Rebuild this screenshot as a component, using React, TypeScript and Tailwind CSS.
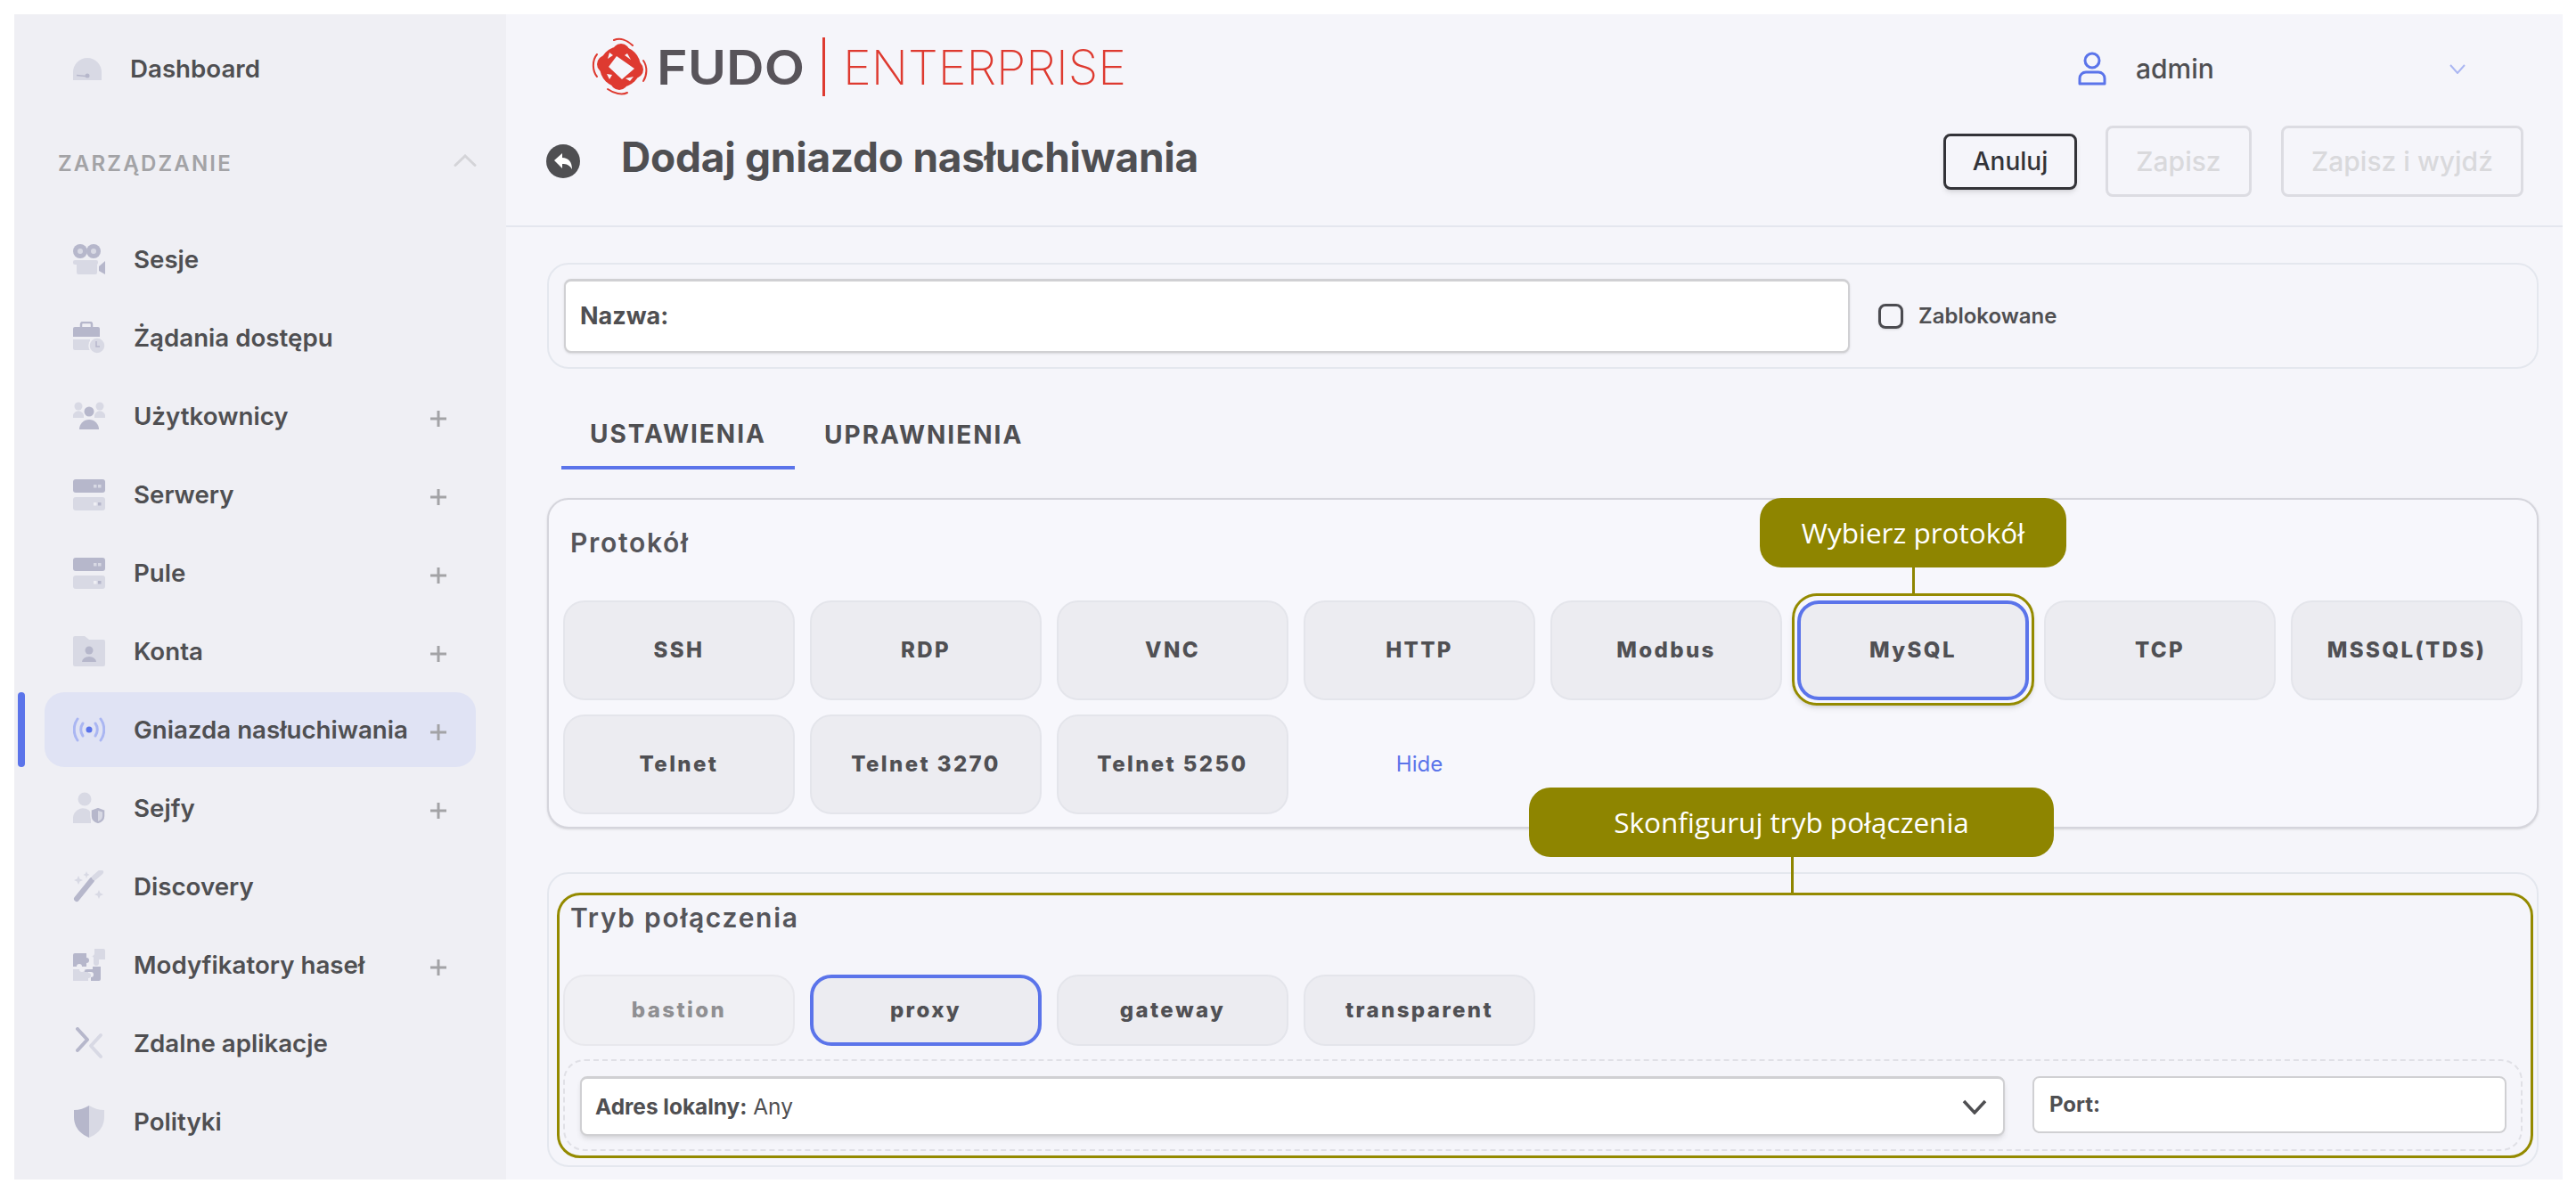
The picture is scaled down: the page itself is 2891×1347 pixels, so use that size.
const A = "#b6b7cb";
const B = "#d8d9e4";

function Icon({ children }: { children: React.ReactNode }) {
  return (
    <svg viewBox="0 0 36 36" className="h-9 w-9 shrink-0">
      {children}
    </svg>
  );
}

const Sesje = () => (
  <Icon>
    <circle cx="8" cy="9" r="8" fill={A} />
    <circle cx="23" cy="9" r="8" fill={A} />
    <circle cx="8" cy="9" r="3" fill={B} />
    <circle cx="23" cy="9" r="3" fill={B} />
    <rect x="0" y="19" width="28" height="5" rx="2" fill={B} />
    <rect x="4" y="22" width="23" height="13" rx="2" fill={B} />
    <path d="M29 26 L36 20 V35 L29 31 Z" fill={A} />
  </Icon>
);

const Zadania = () => (
  <Icon>
    <path d="M9 7 V3 a2 2 0 0 1 2-2 h8 a2 2 0 0 1 2 2 V7" fill="none" stroke={A} strokeWidth="2.5" />
    <path d="M2 6 H28 a2 2 0 0 1 2 2 V17 H0 V8 a2 2 0 0 1 2-2 Z" fill={A} />
    <path d="M0 20 H19 V32 H2 a2 2 0 0 1-2-2 Z" fill={B} />
    <circle cx="27" cy="27" r="9" fill={B} stroke="#efeff4" strokeWidth="1.5" />
    <path d="M26 22 V28 H30" fill="none" stroke={A} strokeWidth="1.5" />
  </Icon>
);

const Uzytkownicy = () => (
  <Icon>
    <circle cx="6" cy="7" r="4.5" fill={B} />
    <circle cx="30" cy="7" r="4.5" fill={B} />
    <path d="M0 20 a6 6 0 0 1 12-3 v3 Z M24 17 a6 6 0 0 1 12 3 H24 Z" fill={B} />
    <circle cx="18" cy="13" r="5.5" fill={A} />
    <path d="M7 33 a11 11 0 0 1 22 0 Z" fill={A} />
  </Icon>
);

const Serwer = () => (
  <Icon>
    <rect x="0" y="1" width="36" height="15" rx="3" fill={A} />
    <rect x="0" y="21" width="36" height="15" rx="3" fill={B} />
    <rect x="23" y="7" width="3.5" height="3.5" fill={B} />
    <rect x="28" y="7" width="3.5" height="3.5" fill={B} />
    <rect x="23" y="27" width="3.5" height="3.5" fill="#efeff4" />
    <rect x="28" y="27" width="3.5" height="3.5" fill={A} />
  </Icon>
);

const Konta = () => (
  <Icon>
    <path d="M2 1 H13 L18 5 H34 a2 2 0 0 1 2 2 V33 a2 2 0 0 1-2 2 H2 a2 2 0 0 1-2-2 V3 a2 2 0 0 1 2-2 Z" fill={B} />
    <circle cx="18" cy="17" r="4.5" fill={A} />
    <path d="M10 30 a8 6 0 0 1 16 0 Z" fill={A} />
  </Icon>
);

const Gniazda = () => (
  <Icon>
    <circle cx="18" cy="18" r="3.5" fill="#5b74ea" />
    <g fill="none" stroke="#aab6f2" strokeWidth="3" strokeLinecap="round">
      <path d="M11 11 C8 15 8 21 11 25" />
      <path d="M25 11 C28 15 28 21 25 25" />
      <path d="M5 6 C0 13 0 23 5 30" />
      <path d="M31 6 C36 13 36 23 31 30" />
    </g>
  </Icon>
);

const Sejfy = () => (
  <Icon>
    <circle cx="13" cy="8" r="7.5" fill={B} />
    <path d="M0 35 V30 a11 11 0 0 1 20-7 V35 Z" fill={B} />
    <path d="M28 17 L36 20 V27 C36 32 32 35 28 36 C24 35 20 32 20 27 V20 Z" fill={A} stroke="#efeff4" strokeWidth="1.5" />
    <path d="M28 21 V33 C31 32 33 30 33 27 V22.5 Z" fill={B} />
  </Icon>
);

const Discovery = () => (
  <Icon>
    <path d="M4 32 L21 11" stroke={A} strokeWidth="6" strokeLinecap="round" />
    <path d="M24 8 L31 2" stroke={B} strokeWidth="6" strokeLinecap="round" />
    <path d="M6 6 l1.5 3.5 L11 11 l-3.5 1.5 L6 16 l-1.5-3.5 L1 11 l3.5-1.5 Z" fill={B} />
    <path d="M15 1 l1 2.5 L18.500 5 l-2.500 1 L15 9 l-1-3 L11.500 5 l2.500-1.500 Z" fill={B} />
    <path d="M29 22 l1.500 3.500 L34 27 l-3.500 1.500 L29 32 l-1.500-3.500 L24 27 l3.500-1.500 Z" fill={B} />
  </Icon>
);

const Modyfikatory = () => (
  <Icon>
    <path d="M2 5 H15 V10 a3 3 0 0 1 0 6 V20 H10 a3 3 0 0 0-6 0 H0 V7 a2 2 0 0 1 2-2 Z" fill={A} />
    <path d="M0 23 H7 a3 3 0 0 0 6 0 H17 V27 a3 3 0 0 1 0 6 V37 H2 a2 2 0 0 1-2-2 Z" fill={B} />
    <path d="M22 20 H31 V34 a2 2 0 0 1-2 2 H20 V32 a3 3 0 0 0 0-6 H13 a3 3 0 0 1 3-3 h6 Z" fill={A} />
    <path d="M24 0 H34 a2 2 0 0 1 2 2 V12 H29 V16 a3 3 0 0 1-6 0 V12 a3 3 0 0 0-3-4 a3 3 0 0 0 4-3 Z" fill={B} />
  </Icon>
);

const Zdalne = () => (
  <Icon>
    <path d="M5 2 L16 14 L5 26" fill="none" stroke={A} strokeWidth="4" strokeLinecap="round" strokeLinejoin="round" />
    <path d="M31 9 L20 21 L31 33" fill="none" stroke={B} strokeWidth="4" strokeLinecap="round" strokeLinejoin="round" />
  </Icon>
);

const Polityki = () => (
  <Icon>
    <path d="M18 0 V36 C8 32 1 24 1 13 V5 C7 5 13 3 18 0 Z" fill={A} />
    <path d="M18 0 V36 C28 32 35 24 35 13 V5 C29 5 23 3 18 0 Z" fill={B} />
  </Icon>
);

const nav = [
  { label: "Sesje", icon: <Sesje /> },
  { label: "Żądania dostępu", icon: <Zadania /> },
  { label: "Użytkownicy", icon: <Uzytkownicy />, plus: true },
  { label: "Serwery", icon: <Serwer />, plus: true },
  { label: "Pule", icon: <Serwer />, plus: true },
  { label: "Konta", icon: <Konta />, plus: true },
  { label: "Gniazda nasłuchiwania", icon: <Gniazda />, plus: true, active: true },
  { label: "Sejfy", icon: <Sejfy />, plus: true },
  { label: "Discovery", icon: <Discovery /> },
  { label: "Modyfikatory haseł", icon: <Modyfikatory />, plus: true },
  { label: "Zdalne aplikacje", icon: <Zdalne /> },
  { label: "Polityki", icon: <Polityki /> },
];

function Sidebar() {
  return (
    <aside className="flex h-full w-[552px] shrink-0 flex-col bg-[#efeff4]">
      <div className="mt-[17px] flex h-[88px] items-center pl-[66px] text-[27.7px] font-semibold text-[#4f4f52]">
        <svg viewBox="0 0 32 25" className="h-[25px] w-8 shrink-0">
          <path d="M0 25 V16 A16 16 0 0 1 32 16 V25 Z" fill={B} />
          <path d="M4 19.500 L14 20.500" stroke={A} strokeWidth="1.500" />
          <circle cx="16" cy="20" r="2.500" fill={A} />
        </svg>
        <span className="ml-[32px] pt-[1px]">Dashboard</span>
      </div>
      <div className="flex h-[126px] items-center justify-between pl-[49px] pr-[33px]">
        <span className="text-[24px] font-semibold tracking-[2.2px] text-[#a3a3a6]">ZARZĄDZANIE</span>
        <svg viewBox="0 0 26 14" className="mb-[8px] h-[14px] w-[26px]">
          <path d="M2 12.500 L13 2 L24 12.500" fill="none" stroke="#d4d4d8" strokeWidth="3" strokeLinecap="round" />
        </svg>
      </div>
      <div className="flex flex-col">
        {nav.map((item) => (
          <div key={item.label} className="relative flex h-[88px] items-center">
            {item.active && <div className="absolute bottom-[2px] left-[4px] top-[2px] w-2 rounded bg-[#5b74ea]" />}
            <div
              className={`ml-[34px] flex h-[84px] w-[484px] items-center rounded-[22px] pl-[32px] ${
                item.active ? "bg-[#e0e3f4]" : ""
              }`}
            >
              {item.icon}
              <span className="ml-[32px] whitespace-nowrap pt-[2px] text-[27.7px] font-semibold text-[#4f4f52]">{item.label}</span>
              {item.plus && (
                <svg viewBox="0 0 18 18" className="absolute left-[467px] top-[38px] h-[18px] w-[18px]">
                  <path d="M9 0 V18 M0 9 H18" stroke="#a3a3a6" strokeWidth="3" />
                </svg>
              )}
            </div>
          </div>
        ))}
      </div>
    </aside>
  );
}

function Logo() {
  return (
    <svg viewBox="0 0 620 66" className="-mt-1 h-[66px] w-[620px] shrink-0">
      <g fill="#de3a30">
        <circle cx="32" cy="33" r="23" />
        <circle cx="33" cy="17" r="10" />
        <circle cx="16" cy="30" r="10" />
        <circle cx="48" cy="36" r="10" />
        <circle cx="31" cy="49" r="10" />
      </g>
      <path d="M28 21 L48 35 L34 47 L19 33 Z" fill="#f5f5fa" />
      <path d="M20 17 L24 20 L18 24 Z M40 18 L44 25 L37 20 Z M47 44 L43 49 L38 46 Z M17 41 L23 42 L20 47 Z" fill="#f5f5fa" />
      <g fill="none" stroke="#de3a30" strokeWidth="2" strokeLinecap="round">
        <path d="M25 3 C32 0 40 3 46 9" />
        <path d="M6 19 C0 26 1 38 6 44" />
        <path d="M58 26 C63 33 62 43 58 49" />
        <path d="M18 58 C25 63 34 65 40 62" />
      </g>
      <text x="73" y="53" fontFamily="Inter, sans-serif" fontSize="54" fontWeight="600" fill="#58545a" textLength="166" lengthAdjust="spacingAndGlyphs">
        FUDO
      </text>
      <rect x="259" y="0" width="3" height="66" fill="#de3a30" />
      <text x="282" y="53" fontFamily="Inter, sans-serif" fontSize="54" fontWeight="200" fill="#de3a30" textLength="318" lengthAdjust="spacingAndGlyphs">
        ENTERPRISE
      </text>
    </svg>
  );
}

function Header() {
  return (
    <header className="h-[239px] shrink-0 border-b-2 border-[#e4e6ee]">
      <div className="flex h-[122px] items-center pl-[96px]">
        <Logo />
        <div className="ml-[1048px] flex items-center">
          <svg viewBox="0 0 32 38" className="h-[38px] w-8 shrink-0">
            <circle cx="16" cy="10" r="8" fill="none" stroke="#5b74ea" strokeWidth="3" />
            <path d="M2 36 V30 a7 7 0 0 1 7-7 h14 a7 7 0 0 1 7 7 V36 Z" fill="none" stroke="#5b74ea" strokeWidth="3" strokeLinejoin="round" />
          </svg>
          <span className="ml-[33px] w-[352px] text-[30px] font-medium text-[#4f4f52]">admin</span>
          <svg viewBox="0 0 18 11" className="h-[11px] w-[18px]">
            <path d="M1 1 L9 10 L17 1" fill="none" stroke="#aab6f2" strokeWidth="2" />
          </svg>
        </div>
      </div>
      <div className="flex h-[86px] items-center justify-between pl-[45px] pr-[44px]">
        <div className="flex items-center">
          <svg viewBox="0 0 38 38" className="h-[38px] w-[38px] shrink-0">
            <circle cx="19" cy="19" r="19" fill="#4f4f52" />
            <path d="M9 18 L18 10 V15 C25 15 29 20 29 28 C26 23 23 22 18 22 V27 Z" fill="#fff" />
          </svg>
          <h1 className="ml-[46px] -mt-[10px] text-[46px] font-bold tracking-[-0.25px] text-[#4f4f52]">Dodaj gniazdo nasłuchiwania</h1>
        </div>
        <div className="flex items-center">
          <button className="h-[63px] w-[150px] rounded-lg border-[3px] border-[#333338] text-[28px] font-medium text-[#333338] shadow-md">
            Anuluj
          </button>
          <button className="ml-[32px] h-20 w-[164px] rounded-lg border-[3px] border-[#dcdce2] text-[30px] font-medium text-[#d9d9dc]">
            Zapisz
          </button>
          <button className="ml-[33px] h-20 w-[272px] rounded-lg border-[3px] border-[#dcdce2] text-[30px] font-medium text-[#d9d9dc]">
            Zapisz i wyjdź
          </button>
        </div>
      </div>
    </header>
  );
}

function OptionButton({
  label,
  selected,
  disabled,
  h = "h-[112px]",
}: {
  label: string;
  selected?: boolean;
  disabled?: boolean;
  h?: string;
}) {
  const tone = selected
    ? "border-[4px] border-[#5b74ea] bg-[#ececf1] text-[#505054]"
    : disabled
      ? "border-2 border-[#e8e8ed] bg-[#f0f0f4] text-[#8f8f92]"
      : "border-2 border-[#e4e5eb] bg-[#ececf1] text-[#505054]";
  return <button className={`${h} ${tone} rounded-[24px] text-[24px] font-extrabold tracking-[2.4px]`}>{label}</button>;
}

const protocols = ["SSH", "RDP", "VNC", "HTTP", "Modbus"];
const protocols2 = ["TCP", "MSSQL(TDS)", "Telnet", "Telnet 3270", "Telnet 5250"];

function Callout({ label, className }: { label: string; className: string }) {
  return (
    <div
      className={`absolute z-10 flex h-[78px] items-center justify-center rounded-[24px] bg-[#8e8500] font-['Open_Sans',sans-serif] text-[31.5px] text-white ${className}`}
    >
      {label}
    </div>
  );
}

export default function App() {
  return (
    <div className="flex h-[1347px] w-[2891px] bg-white pb-[23px] pl-4 pr-[15px] pt-4 font-['Inter',sans-serif]">
      <Sidebar />
      <main className="flex h-full flex-1 flex-col overflow-hidden bg-[#f5f5fa]">
        <Header />
        <div className="flex flex-col pl-[46px] pr-[27px]">
          <section className="mt-[40px] flex h-[119px] items-center rounded-[24px] border-2 border-[#e4e7ee] pl-[17px]">
            <div className="flex h-[83px] w-[1443px] items-center rounded-lg border-2 border-[#d0d0d3] border-t-[3px] bg-white pl-[16px] text-[27px] font-bold text-[#4f4f52] shadow-sm">
              Nazwa:
            </div>
            <div className="ml-[32px] h-7 w-7 rounded-lg border-[3px] border-[#4b4b50] shadow-sm" />
            <span className="ml-[17px] text-[24px] font-semibold text-[#4f4f52]">Zablokowane</span>
          </section>

          <div className="ml-[16px] mt-[26px] flex h-[87px]">
            <div className="flex w-[262px] items-center justify-center border-b-4 border-[#5b74ea] pt-[11px] text-[28px] font-bold tracking-[2px] text-[#4f4f52]">
              USTAWIENIA
            </div>
            <div className="flex items-center pl-[33px] pt-[8px] text-[28px] font-bold tracking-[2px] text-[#4f4f52]">UPRAWNIENIA</div>
          </div>

          <section className="relative mt-[32px] h-[371px] rounded-[24px] border-2 border-[#d5d5dc] bg-[#f7f7fc] pl-[16px] pr-[16px] shadow-sm">
            <Callout label="Wybierz protokół" className="-top-[2px] left-[1359px] w-[344px]" />
            <div className="absolute left-[1530px] top-[76px] h-[29px] w-[3px] bg-[#8e8500]" />
            <h2 className="flex h-[96px] items-center pl-[8px] text-[30px] font-semibold tracking-[1.7px] text-[#55555a]">Protokół</h2>
            <div className="mt-[17px] grid grid-cols-8 gap-x-[17px] gap-y-[16px]">
              {protocols.map((p) => (
                <OptionButton key={p} label={p} />
              ))}
              <OptionButton label="MySQL" selected />
              {protocols2.map((p) => (
                <OptionButton key={p} label={p} />
              ))}
              <div className="flex h-[112px] items-center justify-center text-[24px] text-[#5b74ea]">Hide</div>
            </div>
            <div className="pointer-events-none absolute left-[1395px] top-[105px] h-[126px] w-[272px] rounded-[28px] border-[3px] border-[#948a00] shadow-md" />
          </section>

          <section className="relative mt-[49px] h-[331px] rounded-[24px] border-2 border-[#e4e7ee] pl-[16px] pr-[16px]">
            <Callout label="Skonfiguruj tryb połączenia" className="-top-[97px] left-[1100px] w-[589px]" />
            <div className="absolute left-[1394px] -top-[20px] h-[44px] w-[3px] bg-[#8e8500]" />
            <div className="pointer-events-none absolute bottom-[8px] left-[9px] right-[4px] top-[21px] rounded-[26px] border-[3px] border-[#948a00]" />
            <h2 className="flex h-[98px] items-center pl-[8px] text-[30px] font-semibold tracking-[1.7px] text-[#55555a]">Tryb połączenia</h2>
            <div className="mt-[15px] grid grid-cols-8 gap-x-[17px]">
              <OptionButton h="h-20" label="bastion" disabled />
              <OptionButton h="h-20" label="proxy" selected />
              <OptionButton h="h-20" label="gateway" />
              <OptionButton h="h-20" label="transparent" />
            </div>
            <div className="mt-[15px] flex h-[103px] gap-[31px] rounded-[24px] border-2 border-dashed border-[#e0e0e6] pl-[17px] pr-[16px] pt-[17px]">
              <div className="flex h-[67px] w-[1599px] items-center justify-between rounded-lg border-2 border-[#d0d0d3] border-t-[3px] bg-white pl-[15px] pr-[18px] text-[24.4px] text-[#4f4f52] shadow-md">
                <span>
                  <b className="font-bold">Adres lokalny:</b> Any
                </span>
                <svg viewBox="0 0 28 17" className="h-[17px] w-7">
                  <path d="M2 2 L14 15 L26 2" fill="none" stroke="#4f4f52" strokeWidth="3.500" />
                </svg>
              </div>
              <div className="flex h-[64px] w-[532px] items-center rounded-lg border-2 border-[#d0d0d3] bg-white pl-[17px] text-[24px] font-bold text-[#4f4f52]">
                Port:
              </div>
            </div>
          </section>
        </div>
      </main>
    </div>
  );
}
